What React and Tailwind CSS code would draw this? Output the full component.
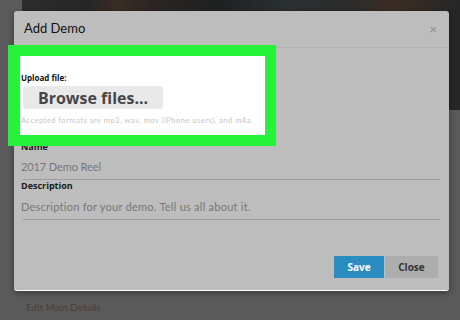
import React from 'react';

// Dimmed "Add Demo" modal with a green highlight round the upload field.
const FONT = { fontFamily: '"Open Sans", "Liberation Sans", sans-serif' };
const BODY = { fontFamily: 'Lato, "Noto Sans", sans-serif' };

function Photo() {
  return (
    <div className="ml-[22px] h-[110px] bg-[linear-gradient(90deg,#2d2d2d_0%,#262626_15%,#3a2d26_22%,#2a2522_30%,#1f2222_45%,#2a2f30_60%,#2c2c2c_75%,#3b2c24_85%,#262626_100%)]" />
  );
}

function Field({ label, value, gap, wide }) {
  return (
    <div className="flex flex-col">
      <span className="text-[9px] font-bold leading-[12px] text-[#1a1a1a]" style={FONT}>{label}</span>
      <span
        className={`text-[11px] leading-[14px] text-[#777] ${wide ? 'tracking-[0.25px]' : 'tracking-[-0.1px]'}`}
        style={{ ...BODY, marginTop: gap }}
      >
        {value}
      </span>
      <div className="mt-[5px] ml-[2px] h-px bg-[#9e9e9e]" />
    </div>
  );
}

export default function App() {
  return (
    <div className="relative w-[460px] h-[320px] overflow-hidden bg-[#5a5a5a]">
      {/* page behind the overlay */}
      <div className="flex flex-col h-full">
        <Photo />
        <div className="flex-1" />
        <span className="pl-[26px] pb-[6px] text-[10px] leading-[14px] text-[#4f3d3b]" style={BODY}>
          Edit Main Details
        </span>
      </div>

      {/* modal */}
      <div className="absolute left-[14px] top-[11px] w-[435px] h-[280px] flex flex-col rounded-[3px] bg-[#bdbdbd] border-b border-white shadow-[0_2px_6px_rgba(0,0,0,0.35)]">
        <div className="h-[37px] shrink-0 flex items-center justify-between pl-[10px] pr-[12px] border-b border-[#b4b4b4]">
          <span className="text-[13px] text-[#111]" style={BODY}>Add Demo</span>
          <span className="text-[13px] font-bold leading-none text-[#999]" style={FONT}>×</span>
        </div>

        <div className="flex flex-col pl-[7px] pr-[9px]">
          {/* highlighted upload field */}
          <div className="relative z-10 -mt-[3px] -ml-[13px] -mb-[5px] w-[268px] h-[101px] border-[11px] border-l-[12px] border-[#26f23b] bg-white flex flex-col">
            <span className="mt-[17px] ml-[1px] text-[8px] font-bold leading-[10px] text-[#111]" style={FONT}>Upload file:</span>
            <div className="mt-[3px] ml-[3px] w-[140px] h-[23px] rounded-[3px] bg-[#e9e9e9] flex items-center justify-center">
              <span className="text-[16px] font-bold leading-none text-[#474747]" style={FONT}>Browse files...</span>
            </div>
            <span className="mt-[7px] ml-[1px] text-[7.5px] leading-[9px] tracking-[0.5px] text-[#c6c6c6] whitespace-nowrap" style={BODY}>
              Accepted formats are mp3, wav, mov (iPhone users), and m4a.
            </span>
          </div>

          <Field label="Name" value="2017 Demo Reel" gap={7} />
          <Field label="Description" value="Description for your demo. Tell us all about it." gap={8} wide />
        </div>

        <div className="flex-1" />
        <div className="flex justify-end pr-[11px] pb-[12px]">
          <button className="w-[50px] h-[22px] bg-[#2a8dc1] text-[10px] font-bold text-white" style={FONT}>Save</button>
          <button className="ml-px w-[53px] h-[22px] bg-[#adadad] text-[10px] font-bold text-[#333]" style={FONT}>Close</button>
        </div>
      </div>
    </div>
  );
}
